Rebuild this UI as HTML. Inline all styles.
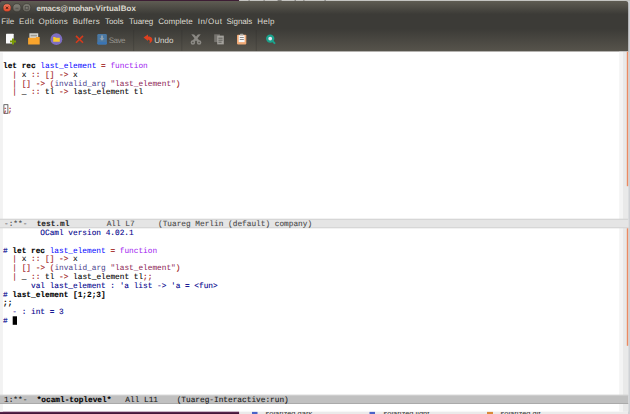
<!DOCTYPE html>
<html><head><meta charset="utf-8"><title>emacs@mohan-VirtualBox</title>
<style>
html,body{margin:0;padding:0;width:630px;height:414px;overflow:hidden;background:#e6e6e6}
#root{position:absolute;left:0;top:0;width:630px;height:414px;overflow:hidden}
#bg{position:absolute;left:0;top:0}
.ln{position:absolute;left:3.00px;white-space:pre;font-family:"Liberation Mono",monospace;font-size:8.00px;line-height:9px;height:9px;letter-spacing:0.0000px;color:#000;text-rendering:geometricPrecision;-webkit-text-stroke:0.1px;transform:scaleX(0.97222);transform-origin:0 0}
.ui{position:absolute;white-space:pre;text-rendering:geometricPrecision;font-family:"Liberation Sans",sans-serif;line-height:10px;height:10px;color:#dfdbd2}
.tt{font-weight:bold}
.sv{color:#94928c}
.k,.i{font-weight:bold;color:#000}
.f,.p,.b,.s{-webkit-text-stroke:0}
.o{-webkit-text-stroke:0.15px}
.f{color:#0000ff}
.o{color:#a52a2a}
.p{color:#a020f0}
.b{color:#483d8b}
.s{color:#8b2252}
.u{color:#00008b}
.m1{color:#4a4a4a;margin-left:0.9px}
.m1 .i{color:#2a2a2a}
.m2{color:#1a1a1a;margin-left:0.9px}
#strip{position:absolute;left:0;top:412px;width:630px;height:2px;overflow:hidden}
.bt{position:absolute;top:-2.9px;font-family:"Liberation Sans",sans-serif;font-size:7.5px;line-height:9px;color:#333;white-space:pre}
</style></head><body><div id="root">
<svg id="bg" width="630" height="414" viewBox="0 0 630 414">
<defs>
<linearGradient id="hg" x1="0" y1="1" x2="0" y2="51.5" gradientUnits="userSpaceOnUse">
<stop offset="0" stop-color="#5f5c53"/>
<stop offset="0.26" stop-color="#3c3b37"/>
<stop offset="0.55" stop-color="#3c3b37"/>
<stop offset="1" stop-color="#57544c"/>
</linearGradient>
<linearGradient id="pg" x1="0" y1="411.5" x2="0" y2="414" gradientUnits="userSpaceOnUse">
<stop offset="0" stop-color="#6d3560"/>
<stop offset="1" stop-color="#3a1030"/>
</linearGradient>
</defs>
<!-- desktop / other windows behind -->
<rect x="0" y="0" width="630" height="414" fill="#e4e4e4"/>
<rect x="0" y="0" width="239.3" height="3" fill="#3d1d34"/>
<rect x="239.3" y="0" width="391" height="3" fill="#c4c4c1"/>
<g fill="#7d7c78"><rect x="248.6" y="0" width="1" height="2"/><rect x="263.6" y="0" width="1" height="2"/><rect x="277.6" y="0" width="4" height="2"/><rect x="294.6" y="0" width="1.2" height="2"/><rect x="303.4" y="0" width="1" height="2"/><rect x="324.5" y="0" width="1.2" height="2"/></g>
<rect x="0" y="410" width="239.3" height="4" fill="url(#pg)"/>
<rect x="239.3" y="410" width="391" height="4" fill="#ebebeb"/>
<rect x="628" y="1" width="2" height="413" fill="#cfd1d5"/>
<!-- window -->
<path d="M0 3.7 Q0 0.9 2.4 0.9 L625.7 0.9 Q628.2 0.9 628.2 3.4 L628.2 52 L0 52 Z" fill="url(#hg)"/>
<rect x="0" y="51.45" width="628.2" height="360.2" fill="#ffffff"/>
<!-- fringes -->
<rect x="0" y="52.5" width="2.9" height="359.2" fill="#f2f2f2"/>
<!-- scrollbar tracks -->
<rect x="619.2" y="51.7" width="3.8" height="360" fill="#f4f4f4"/>
<rect x="623" y="51.7" width="5.2" height="360" fill="#e9e9e9"/>
<rect x="626.8" y="51.7" width="1.4" height="134.5" fill="#ec8a62"/>
<rect x="626.8" y="227.5" width="1.4" height="118.3" fill="#ec8a62"/>
<!-- mode lines -->
<rect x="0" y="218.8" width="628.2" height="9.4" fill="#e5e5e5"/>
<rect x="0" y="218.8" width="628.2" height="0.9" fill="#d0d0d0"/>
<rect x="0" y="227.3" width="628.2" height="0.9" fill="#d2d2d2"/>
<rect x="0" y="394.8" width="628.2" height="9.2" fill="#c0c0c0"/>
<rect x="0" y="394.8" width="628.2" height="0.8" fill="#d6d6d6"/>
<rect x="0" y="403.1" width="628.2" height="0.9" fill="#a8a8a8"/>
<!-- cursors -->
<rect x="3.9" y="104.7" width="4" height="8.6" fill="none" stroke="#444" stroke-width="0.8"/>
<rect x="12.7" y="316.3" width="4.3" height="8.5" fill="#000"/>
<!-- toolbar separators -->
<g stroke="#2f2e2b" stroke-width="0.7" opacity="0.4">
<line x1="133.6" y1="30" x2="133.6" y2="51"/>
<line x1="181.8" y1="30" x2="181.8" y2="51"/>
<line x1="256.3" y1="30" x2="256.3" y2="51"/>
</g>
<!-- window buttons -->
<defs>
<linearGradient id="cb" x1="0" y1="0" x2="0" y2="1"><stop offset="0" stop-color="#f27a5e"/><stop offset="1" stop-color="#df4526"/></linearGradient>
<linearGradient id="gb" x1="0" y1="0" x2="0" y2="1"><stop offset="0" stop-color="#858379"/><stop offset="1" stop-color="#65635d"/></linearGradient>
</defs>
<circle cx="7.05" cy="7.8" r="4.05" fill="url(#cb)" stroke="#34322e" stroke-width="0.6"/>
<path d="M5.9 6.65 L8.2 8.95 M8.2 6.65 L5.9 8.95" stroke="#4d1c10" stroke-width="1" fill="none"/>
<circle cx="16.9" cy="7.8" r="4.05" fill="url(#gb)" stroke="#34322e" stroke-width="0.6"/>
<path d="M15.4 8.3 L18.4 8.3" stroke="#55534e" stroke-width="0.9"/>
<circle cx="26.7" cy="7.8" r="4.05" fill="url(#gb)" stroke="#34322e" stroke-width="0.6"/>
<rect x="25.2" y="6.3" width="3" height="3" fill="#7d7b74" stroke="#4b4a45" stroke-width="0.8"/>
<!-- new file -->
<rect x="6" y="33.7" width="7.7" height="9.9" rx="0.6" fill="#fafafa"/>
<path d="M10 41.4 H16 M13 38.4 V44.4" stroke="#7c9a06" stroke-width="2" fill="none"/>
<!-- open folder -->
<rect x="29.4" y="33.3" width="8.8" height="5.5" fill="#d9d9d4"/>
<rect x="30.6" y="34.8" width="6.4" height="1.6" fill="#9d9b92"/>
<path d="M28.1 37.7 H35.7 L36.2 37 H39.7 V44.4 H28.1 Z" fill="#f9a42c"/>
<!-- dired -->
<circle cx="56.4" cy="39.2" r="5.9" fill="#7e6ec2"/>
<path d="M53.2 37 H55.2 L55.8 37.7 H59.8 V41.7 H53.2 Z" fill="#f8c92c"/>
<!-- close X -->
<path d="M76 35.9 L83 42.7 M83 35.9 L76 42.7" stroke="#d63a1c" stroke-width="1.6" fill="none"/>
<!-- save -->
<rect x="97.3" y="34" width="9.6" height="10.4" rx="1.2" fill="#4a78a3"/>
<rect x="97.3" y="42.1" width="9.6" height="2.3" rx="0.8" fill="#3b74b2"/>
<path d="M101.1 35.6 H102.9 V38.2 H104.4 L102 40.8 L99.6 38.2 H101.1 Z" fill="#93a3b0"/>
<!-- undo -->
<path d="M143.5 37.6 L148 34.6 V36.4 C151.6 36.2 152.8 38.6 152.2 40.6 C151.8 42 150.6 43 149.2 43.5 C150.3 42 150.3 40.2 148 39.6 V41 Z" fill="#dd4020"/>
<!-- cut -->
<g fill="#8b8984">
<path d="M191.3 34.2 L194.1 34.6 L199.8 40.9 L197.3 42 Z"/>
<path d="M200.7 34.2 L197.9 34.6 L192.2 40.9 L194.7 42 Z"/>
</g>
<g stroke="#8b8984" fill="none" stroke-width="1.6">
<circle cx="192.9" cy="42.5" r="1.5"/>
<circle cx="199.1" cy="42.5" r="1.5"/>
</g>
<!-- copy -->
<rect x="214.2" y="34.3" width="5.7" height="7.8" fill="#75736e"/>
<rect x="217.2" y="35.6" width="6.6" height="8.8" fill="#a3a19c"/>
<path d="M218.4 38.2 H222.6 M218.4 40.2 H222.6 M218.4 42.2 H221.6" stroke="#4d4c48" stroke-width="0.8"/>
<!-- paste -->
<rect x="237" y="34.7" width="9.3" height="9.7" rx="0.8" fill="#f0a975"/>
<rect x="238.7" y="35.3" width="5.9" height="6.8" fill="#f7f7f7"/>
<rect x="240" y="33.8" width="3.4" height="1.8" rx="0.5" fill="#a9a7a1"/>
<path d="M239.8 37.5 H243.8 M239.8 39.5 H243.8" stroke="#8a8a8a" stroke-width="1"/>
<!-- search -->
<path d="M272.6 41.1 L274.5 43.1" stroke="#1ba28c" stroke-width="2" stroke-linecap="round"/>
<circle cx="270.2" cy="38.6" r="3.05" fill="#e4e6f4" stroke="#1ba28c" stroke-width="2.3"/>
<!-- bottom strip remnants of other window -->
<rect x="252" y="411.9" width="5.5" height="2.1" fill="#4a63c8"/>
<rect x="369.5" y="411.9" width="5.5" height="2.1" fill="#4a63c8"/>
<rect x="487" y="411.9" width="6" height="2.1" fill="#d98a3a"/>
</svg>

<div class="ui tt" style="left:36.60px;top:4.29px;font-size:7.90px;letter-spacing:-0.193px">emacs@</div>
<div class="ui tt" style="left:68.50px;top:4.29px;font-size:7.90px;letter-spacing:-0.299px">mohan-</div>
<div class="ui tt" style="left:95.50px;top:4.29px;font-size:7.90px;letter-spacing:0.108px">VirtualBox</div>
<div class="ui mn" style="left:1.30px;top:17.06px;font-size:8.00px;letter-spacing:-0.034px">File</div>
<div class="ui mn" style="left:19.10px;top:17.06px;font-size:8.00px;letter-spacing:0.402px">Edit</div>
<div class="ui mn" style="left:38.60px;top:17.06px;font-size:8.00px;letter-spacing:0.271px">Options</div>
<div class="ui mn" style="left:72.70px;top:17.06px;font-size:8.00px;letter-spacing:0.316px">Buffers</div>
<div class="ui mn" style="left:104.90px;top:17.06px;font-size:8.00px;letter-spacing:0.004px">Tools</div>
<div class="ui mn" style="left:128.90px;top:17.06px;font-size:8.00px;letter-spacing:-0.132px">Tuareg</div>
<div class="ui mn" style="left:158.20px;top:17.06px;font-size:8.00px;letter-spacing:0.050px">Complete</div>
<div class="ui mn" style="left:197.70px;top:17.06px;font-size:8.00px;letter-spacing:0.500px">In/Out</div>
<div class="ui mn" style="left:226.60px;top:17.06px;font-size:8.00px;letter-spacing:-0.091px">Signals</div>
<div class="ui mn" style="left:257.20px;top:17.06px;font-size:8.00px;letter-spacing:0.278px">Help</div>
<div class="ui sv" style="left:108.80px;top:36.46px;font-size:8.00px;letter-spacing:-0.512px">Save</div>
<div class="ui ud" style="left:154.30px;top:36.46px;font-size:8.00px;letter-spacing:0.023px">Undo</div>
<div class="ln " style="top:61.96px"><span class="k">let rec</span> <span class="f">last_element</span> <span class="o">=</span> <span class="p">function</span></div>
<div class="ln " style="top:70.76px">  <span class="o">|</span> x <span class="o">::</span> <span class="o">[]</span> <span class="o">-&gt;</span> x</div>
<div class="ln " style="top:79.56px">  <span class="o">|</span> <span class="o">[]</span> <span class="o">-&gt;</span> <span class="o">(</span><span class="b">invalid_arg</span> <span class="s">"last_element"</span><span class="o">)</span></div>
<div class="ln " style="top:88.36px">  <span class="o">|</span> _ <span class="o">::</span> tl <span class="o">-&gt;</span> last_element tl</div>
<div class="ln " style="top:105.96px"><span class="o">;;</span></div>
<div class="ln m1" style="top:219.86px">-:**-  <span class="i">test.ml</span>        All L7     (Tuareg Merlin (default) company)</div>
<div class="ln " style="top:229.06px"><span class="u">        OCaml version 4.02.1</span></div>
<div class="ln " style="top:246.66px"><span class="u"># </span><span class="k">let rec</span> <span class="f">last_element</span> <span class="o">=</span> <span class="p">function</span></div>
<div class="ln " style="top:255.46px">  <span class="o">|</span> x <span class="o">::</span> <span class="o">[]</span> <span class="o">-&gt;</span> x</div>
<div class="ln " style="top:264.26px">  <span class="o">|</span> <span class="o">[]</span> <span class="o">-&gt;</span> <span class="o">(</span><span class="b">invalid_arg</span> <span class="s">"last_element"</span><span class="o">)</span></div>
<div class="ln " style="top:273.06px">  <span class="o">|</span> _ <span class="o">::</span> tl <span class="o">-&gt;</span> last_element tl<span class="o">;;</span></div>
<div class="ln " style="top:281.86px"><span class="u">      val last_element : 'a list -&gt; 'a = &lt;fun&gt;</span></div>
<div class="ln " style="top:290.66px"><span class="u"># </span><span class="i">last_element [1;2;3]</span></div>
<div class="ln " style="top:299.46px"><span class="i">;;</span></div>
<div class="ln " style="top:308.26px"><span class="u">  - : int = 3</span></div>
<div class="ln " style="top:317.06px"><span class="u"># </span></div>
<div class="ln m2" style="top:395.96px">1:**-  <span class="i">*ocaml-toplevel*</span>   All L11    (Tuareg-Interactive:run)</div>
<div id="strip">
<div class="bt" style="left:265.5px">solarized dark</div>
<div class="bt" style="left:383.5px">solarized light</div>
<div class="bt" style="left:500.5px">solarized git</div>
</div>
</div></body></html>
